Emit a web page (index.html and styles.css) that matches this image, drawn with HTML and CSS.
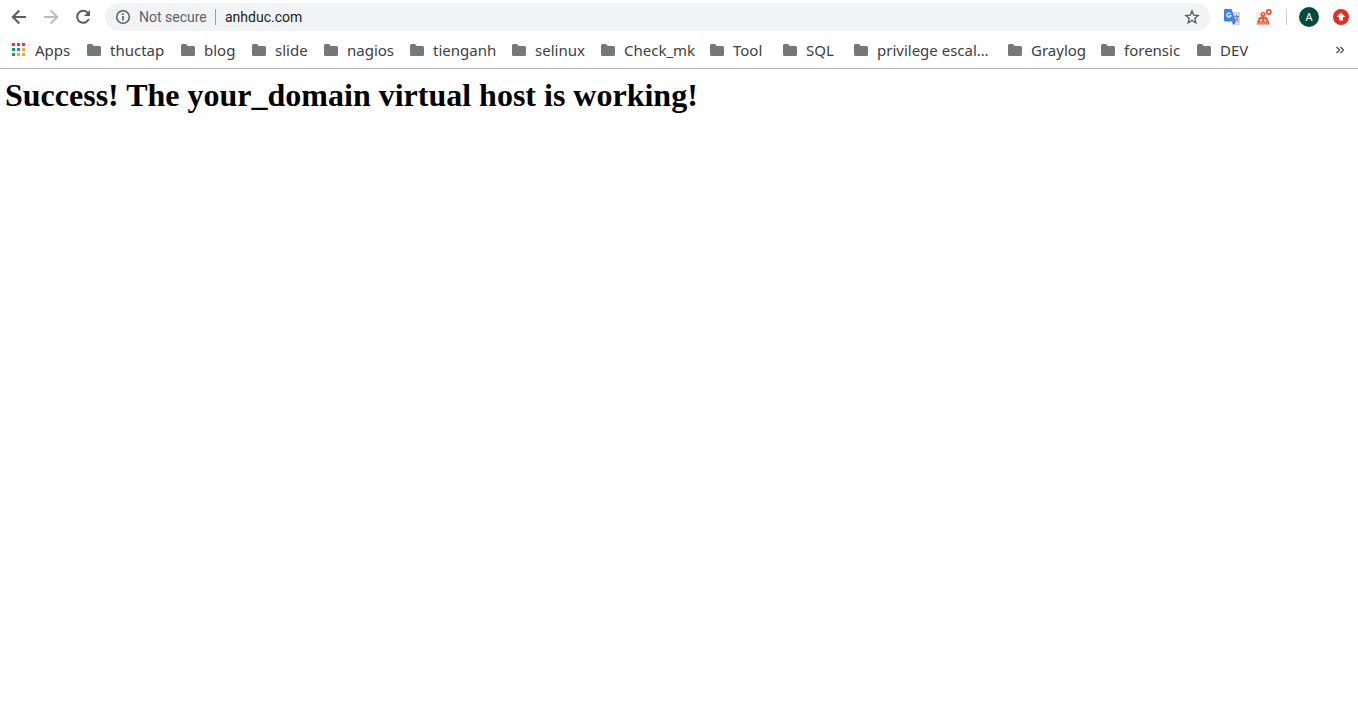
FILE: index.html
```
<!DOCTYPE html>
<html lang="en">
<head>
<meta charset="utf-8">
<title>anhduc.com</title>
<link rel="stylesheet" href="styles.css">
</head>
<body>
<svg class="defs" aria-hidden="true">
  <symbol id="folder" viewBox="0 0 14 12"><path d="M1.500 0H5l1.800 2H12.500Q14 2 14 3.500V10.500Q14 12 12.500 12H1.500Q0 12 0 10.500V1.500Q0 0 1.500 0Z" fill="#74787b"/></symbol>
</svg>
<header class="browser">
  <div class="toolbar">
    <div class="nav">
      <button class="icon-button" type="button" aria-label="Back">
        <svg width="16" height="16" viewBox="0 0 16 16" fill="none" stroke="#5a5e63" stroke-width="2"><path d="M15 8H2M8.300 1.500L1.800 8l6.500 6.500"/></svg>
      </button>
      <button class="icon-button" type="button" aria-label="Forward" disabled>
        <svg width="16" height="16" viewBox="0 0 16 16" fill="none" stroke="#bbbcbe" stroke-width="2"><path d="M1 8h13M7.700 1.500L14.200 8l-6.500 6.500"/></svg>
      </button>
      <button class="icon-button" type="button" aria-label="Reload">
        <svg width="16" height="16" viewBox="0 0 16 16"><path d="M13 4.200A6 6 0 1 0 13.800 10" fill="none" stroke="#5a5e63" stroke-width="2"/><path d="M15 1v6H9z" fill="#5a5e63"/></svg>
      </button>
    </div>
    <div class="omnibox">
      <button class="security" type="button">
        <svg width="16" height="16" viewBox="0 0 16 16"><circle cx="8" cy="8" r="6.300" fill="none" stroke="#5a5e63" stroke-width="1.500"/><path d="M7.200 7h1.600v4.500H7.200zM7.200 4.300h1.600v1.600H7.200z" fill="#5a5e63"/></svg>
        <span>Not secure</span>
      </button>
      <input class="address" type="text" value="anhduc.com" aria-label="Address">
      <button class="icon-button" type="button" aria-label="Bookmark this page">
        <svg width="16" height="16" viewBox="0 0 16 16"><path d="M8 2l1.700 4.100 4.400.4-3.300 2.900 1 4.400L8 11.500l-3.800 2.300 1-4.400L1.900 6.500l4.400-.4z" fill="none" stroke="#5a5e63" stroke-width="1.400"/></svg>
      </button>
    </div>
    <div class="extensions">
      <button class="icon-button" type="button" aria-label="Translate">
        <svg width="16" height="16" viewBox="0 0 16 16"><path d="M5 3h10q1 0 1 1v11q0 1-1 1H9z" fill="#d5d6d8"/><path d="M8.500 12.500H12L9 16z" fill="#2454b4"/><path d="M1 0h6.500l4.500 12.500H1q-1 0-1-1V1q0-1 1-1z" fill="#3f82ed"/><path d="M6.600 4.800A2.100 2.100 0 1 0 7 6.500H5" fill="none" stroke="#fff" stroke-width="1.200"/><path d="M10.500 7.500H15M12.500 6v1.500M14 7.500q-.5 3-2.500 4.500M11.500 9l3 3.500" fill="none" stroke="#6c7e88"/></svg>
      </button>
      <button class="icon-button" type="button" aria-label="Sitemap extension">
        <svg width="16" height="16" viewBox="0 0 16 16"><path d="M0 3h14v13H0z" fill="#f0eeed"/><g fill="none" stroke="#f9512f"><circle cx="12.800" cy="3" r="2.100" stroke-width="1.700"/><path d="M7 6v8M3 13v-2q0-2 2-2h4q2 0 2 2v2" stroke-width="1.800"/></g><g fill="#f9512f"><circle cx="7" cy="5.500" r="2.500"/><path d="M1.300 12h3.500v3.500H1.300zM5.400 12h3.500v3.500H5.400zM9.500 12H13v3.500H9.500z"/></g><path d="M6 5h2M3 13.500v1M7.200 13.500v1M11.300 13.500v1" stroke="#fff"/></svg>
      </button>
      <span class="divider"></span>
      <button class="avatar" type="button" aria-label="Profile A">A</button>
      <button class="icon-button" type="button" aria-label="Update available">
        <svg width="16" height="16" viewBox="0 0 16 16"><circle cx="8" cy="8" r="8" fill="#e52c25"/><path d="M8 3.600L12.200 8H10v3.500H6V8H3.800z" fill="#fff"/></svg>
      </button>
    </div>
  </div>
  <nav class="bookmarks" aria-label="Bookmarks">
    <a class="bookmark" href="#"><svg width="14" height="14" viewBox="0 0 14 14"><path d="M0 0h3v3H0zM5 0h3v3H5zM10 0h3v3h-3z" fill="#f4352e"/><path d="M0 5h3v3H0zM0 10h3v3H0z" fill="#0f9d58"/><path d="M5 5h3v3H5z" fill="#1686f5"/><path d="M10 5h3v3h-3zM5 10h3v3H5zM10 10h3v3h-3z" fill="#f9a825"/></svg>Apps</a>
    <a class="bookmark" href="#"><svg width="14" height="12"><use href="#folder"/></svg>thuctap</a>
    <a class="bookmark" href="#"><svg width="14" height="12"><use href="#folder"/></svg>blog</a>
    <a class="bookmark" href="#"><svg width="14" height="12"><use href="#folder"/></svg>slide</a>
    <a class="bookmark" href="#"><svg width="14" height="12"><use href="#folder"/></svg>nagios</a>
    <a class="bookmark" href="#"><svg width="14" height="12"><use href="#folder"/></svg>tienganh</a>
    <a class="bookmark" href="#"><svg width="14" height="12"><use href="#folder"/></svg>selinux</a>
    <a class="bookmark" href="#"><svg width="14" height="12"><use href="#folder"/></svg>Check_mk</a>
    <a class="bookmark" href="#"><svg width="14" height="12"><use href="#folder"/></svg>Tool</a>
    <a class="bookmark" href="#"><svg width="14" height="12"><use href="#folder"/></svg>SQL</a>
    <a class="bookmark" href="#"><svg width="14" height="12"><use href="#folder"/></svg>privilege escal…</a>
    <a class="bookmark" href="#"><svg width="14" height="12"><use href="#folder"/></svg>Graylog</a>
    <a class="bookmark" href="#"><svg width="14" height="12"><use href="#folder"/></svg>forensic</a>
    <a class="bookmark" href="#"><svg width="14" height="12"><use href="#folder"/></svg>DEV</a>
    <button class="more" type="button" aria-label="More bookmarks"><svg width="8" height="8" viewBox="0 0 8 8" fill="none" stroke="#55595d" stroke-width="1.500"><path d="M.5 1l3 3-3 3M4.500 1l3 3-3 3"/></svg></button>
  </nav>
</header>
<main class="page">
  <h1 class="headline">Success! The your_domain virtual host is working!</h1>
</main>
</body>
</html>
```
FILE: styles.css
```
* { box-sizing: border-box; }
body {
  margin: 0;
  background: #fff;
  font-family: "Noto Sans", "Open Sans", sans-serif;
}
.defs { position: absolute; width: 0; height: 0; }
svg { display: block; flex: none; }
button {
  border: 0;
  padding: 0;
  background: none;
  font: inherit;
  color: inherit;
}
.browser { border-bottom: 1px solid #b3b3b3; }
.toolbar {
  display: flex;
  align-items: center;
  height: 34px;
  padding: 0 9px 0 11px;
}
.nav { display: flex; gap: 16px; }
.icon-button { flex: none; width: 16px; height: 16px; }
.omnibox {
  flex: 1;
  display: flex;
  align-items: center;
  height: 28px;
  margin-left: 14px;
  padding: 0 10px;
  border-radius: 14px;
  background: #f1f3f4;
  font-family: Roboto, sans-serif;
  font-size: 14px;
}
.security {
  display: flex;
  align-items: center;
  gap: 8px;
  width: 101px;
  height: 16px;
  border-right: 1px solid #9a9da0;
  line-height: 16px;
  color: #5f6368;
  white-space: nowrap;
}
.address {
  flex: 1;
  min-width: 0;
  height: 16px;
  border: 0;
  padding: 0 9px;
  background: none;
  font: inherit;
  line-height: 16px;
  color: #202124;
  outline: 0;
}
.extensions {
  display: flex;
  align-items: center;
  gap: 16px;
  margin-left: 14px;
}
.divider { width: 1px; height: 16px; margin: 0 -4px 0 -2px; background: #cbcdcf; }
.avatar {
  width: 20px;
  height: 20px;
  margin-right: -2px;
  border-radius: 50%;
  background: #004d40;
  color: #fff;
  font-size: 11px;
  line-height: 20px;
  text-align: center;
}
.bookmarks {
  display: grid;
  grid-template-columns: 75px 94px 71px 72px 86px 102px 89px 109px 73px 71px 154px 93px 96px 1fr 8px;
  align-items: center;
  height: 34px;
  padding: 0 14px 2px 12px;
}
.bookmark {
  display: flex;
  align-items: center;
  gap: 9px;
  font-size: 15px;
  line-height: 20px;
  color: #3c4043;
  text-decoration: none;
  white-space: nowrap;
}
.more { width: 8px; height: 8px; }
.page { padding: 8px 5px; }
.headline {
  margin: 0;
  font-family: "Liberation Serif", serif;
  font-size: 32px;
  line-height: 37px;
  color: #000;
}
```
